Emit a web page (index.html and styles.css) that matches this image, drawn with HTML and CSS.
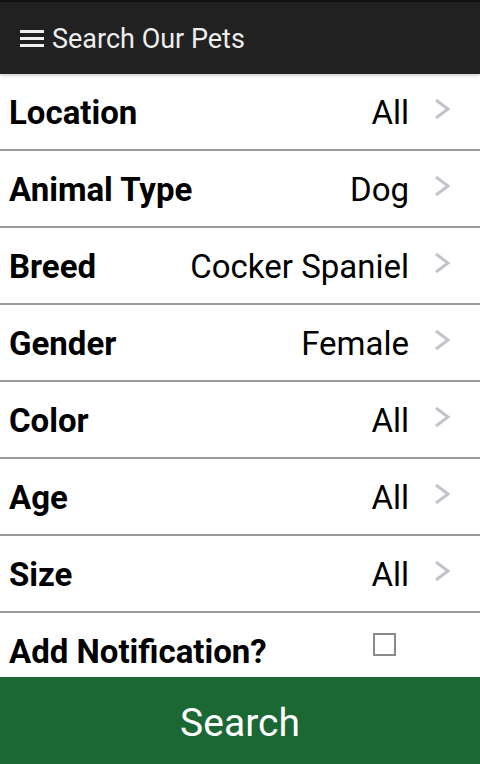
FILE: index.html
```html
<!DOCTYPE html>
<html>
<head>
<meta charset="utf-8">
<link rel="stylesheet" href="styles.css">
</head>
<body>
<div class="app">
  <header class="topbar">
    <span class="burger"><i></i><i></i><i></i></span>
    <span class="title">Search Our Pets</span>
  </header>
  <ul class="list">
    <li class="row"><span class="label">Location</span><span class="value">All</span><svg class="chev" viewBox="0 0 18 22"><path d="M3 2 L15 11 L3 20"/></svg></li>
    <li class="row"><span class="label">Animal Type</span><span class="value">Dog</span><svg class="chev" viewBox="0 0 18 22"><path d="M3 2 L15 11 L3 20"/></svg></li>
    <li class="row"><span class="label">Breed</span><span class="value">Cocker Spaniel</span><svg class="chev" viewBox="0 0 18 22"><path d="M3 2 L15 11 L3 20"/></svg></li>
    <li class="row"><span class="label">Gender</span><span class="value">Female</span><svg class="chev" viewBox="0 0 18 22"><path d="M3 2 L15 11 L3 20"/></svg></li>
    <li class="row"><span class="label">Color</span><span class="value">All</span><svg class="chev" viewBox="0 0 18 22"><path d="M3 2 L15 11 L3 20"/></svg></li>
    <li class="row"><span class="label">Age</span><span class="value">All</span><svg class="chev" viewBox="0 0 18 22"><path d="M3 2 L15 11 L3 20"/></svg></li>
    <li class="row"><span class="label">Size</span><span class="value">All</span><svg class="chev" viewBox="0 0 18 22"><path d="M3 2 L15 11 L3 20"/></svg></li>
    <li class="row last"><span class="label">Add Notification?</span><span class="check"></span></li>
  </ul>
  <button class="search">Search</button>
</div>
</body>
</html>
```
FILE: styles.css
```css
* { box-sizing: border-box; }
html, body { margin: 0; padding: 0; background: #fff; }
body { font-family: Roboto, "Noto Sans", sans-serif; width: 480px; height: 764px; overflow: hidden; }
.app { display: flex; flex-direction: column; height: 764px; }
.topbar {
  height: 74px;
  background: #212121;
  border-top: 2px solid #111;
  display: flex;
  align-items: center;
  padding-left: 20px;
  box-shadow: 0 1px 4px rgba(0,0,0,0.25);
  position: relative;
  z-index: 1;
}
.burger { display: flex; flex-direction: column; gap: 4px; width: 24px; margin-right: 8px; margin-top: 1px; }
.burger i { display: block; height: 3px; background: #f0f0f0; }
.title { color: #eeeeee; font-size: 27px; margin-top: 1px; }
.list { list-style: none; margin: 0; padding: 0; flex: 1; display: flex; flex-direction: column; }
.row {
  height: 77px;
  border-bottom: 2px solid #9a9a9a;
  display: flex;
  align-items: center;
  padding-left: 9px;
  padding-right: 29px;
  padding-top: 2px;
}
.row.last { border-bottom: none; flex: 1; height: auto; align-items: flex-start; padding-top: 19px; }
.label { font-weight: 700; font-size: 33px; color: #000; flex: 1; }
.value { font-size: 33px; color: #000; margin-right: 24px; }
.chev { width: 18px; height: 22px; fill: none; stroke: #c4c3cb; stroke-width: 3; margin-top: -7px; }
.check { width: 23px; height: 23px; border: 2px solid #8a8a8a; margin-right: 55px; margin-top: 1px; }
.search {
  height: 87px;
  background: #1b6834;
  color: #fff;
  border: none;
  font-family: Roboto, "Noto Sans", sans-serif;
  font-size: 39px;
  padding: 4px 0 0 0;
  width: 100%;
}
```
